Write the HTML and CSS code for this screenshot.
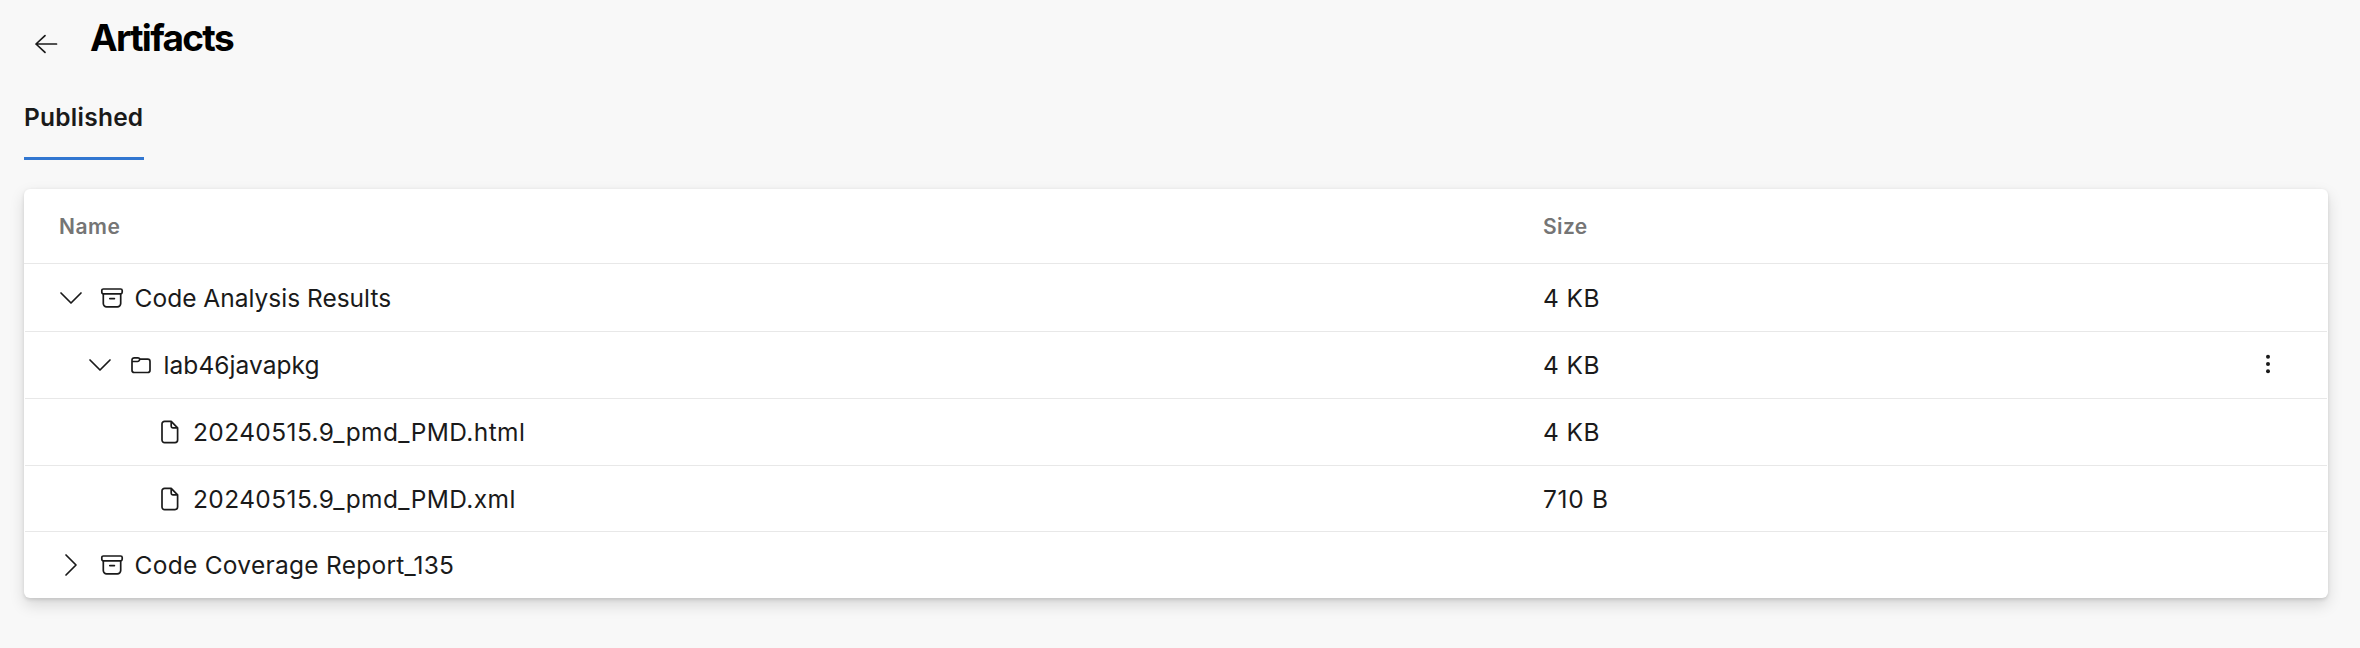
FILE: index.html
```
<!DOCTYPE html>
<html lang="en">
<head>
<meta charset="utf-8">
<title>Artifacts</title>
<link rel="stylesheet" href="styles.css">
</head>
<body>
<svg class="defs" aria-hidden="true">
  <symbol id="down" viewBox="0 0 24 24"><path d="M2 7 12 17 22 7"/></symbol>
  <symbol id="right" viewBox="0 0 24 24"><path d="M7 2 17 12 7 22"/></symbol>
  <symbol id="archive" viewBox="0 0 24 24"><rect x="1.8" y="3" width="20.4" height="4.8" rx="1.6"/><path d="M3.3 7.8V17.5a3.3 3.3 0 0 0 3.3 3.3H17.4a3.3 3.3 0 0 0 3.3-3.3V7.8M9.8 12.6H14.4"/></symbol>
  <symbol id="folder" viewBox="0 0 24 24"><path d="M3 7.500V17.200a2.300 2.300 0 0 0 2.300 2.300H18.700a2.300 2.300 0 0 0 2.300-2.300V8.400a2.300 2.300 0 0 0-2.300-2.300H11L10 5.100Q9.600 4.800 9 4.800H5.300A2.300 2.300 0 0 0 3 7.100M3 8.500H8.500Q9.400 8.500 10 7.800L11 6.100"/></symbol>
  <symbol id="file" viewBox="0 0 24 24"><path d="M13.2 1.4H6.600A2.600 2.600 0 0 0 4 4V20a2.600 2.600 0 0 0 2.600 2.600H17A2.600 2.600 0 0 0 19.600 20V7.800ZM13.200 1.400V6.200A1.600 1.600 0 0 0 14.800 7.800H19.600"/></symbol>
</svg>
<header class="top">
  <svg class="back" viewBox="0 0 24 20"><path d="M22.500 10H2M11 1.700 2 10 11 18.300"/></svg>
  <h1 class="title">Artifacts</h1>
</header>
<nav class="tabs"><a class="tab">Published</a></nav>
<main class="card">
  <div class="row head"><div class="name">Name</div><div class="size">Size</div></div>
  <div class="row first"><div class="name"><svg class="icon"><use href="#down"/></svg><svg class="icon kind"><use href="#archive"/></svg><span>Code Analysis Results</span></div><div class="size">4 KB</div></div>
  <div class="row"><div class="name level-2"><svg class="icon"><use href="#down"/></svg><svg class="icon kind"><use href="#folder"/></svg><span class="folder-name">lab46javapkg</span></div><div class="size">4 KB</div><svg class="more" viewBox="0 0 6 20"><circle cx="3" cy="2.800" r="2"/><circle cx="3" cy="10" r="2"/><circle cx="3" cy="17.200" r="2"/></svg></div>
  <div class="row"><div class="name level-3"><svg class="icon"><use href="#file"/></svg><span class="file-name">20240515.9_pmd_PMD.html</span></div><div class="size">4 KB</div></div>
  <div class="row short"><div class="name level-3"><svg class="icon"><use href="#file"/></svg><span class="file-name">20240515.9_pmd_PMD.xml</span></div><div class="size bytes">710 B</div></div>
  <div class="row short last"><div class="name"><svg class="icon"><use href="#right"/></svg><svg class="icon kind"><use href="#archive"/></svg><span class="report-name">Code Coverage Report_135</span></div></div>
</main>
</body>
</html>
```
FILE: styles.css
```
* { box-sizing: border-box; }
body {
  margin: 0;
  height: 648px;
  padding: 0 32px 0 24px;
  background: #f8f8f8;
  color: #1a1a1a;
  font: 400 24.5px/30px Inter, "Liberation Sans", sans-serif;
  overflow: hidden;
}
svg { fill: none; stroke: #1a1a1a; stroke-width: 1.7; stroke-linecap: round; stroke-linejoin: round; flex: none; }
.defs { display: none; }
.top { display: flex; height: 87px; padding: 16px 0 0 10px; gap: 32px; }
.back { width: 24px; height: 20px; margin-top: 17.5px; }
.title { margin: 0; color: #000; font-size: 37px; line-height: 44px; font-weight: 700; letter-spacing: -1.7px; }
.tabs { display: flex; height: 102px; }
.tab { width: 120px; height: 73px; padding-top: 15px; border-bottom: 3px solid #3277d1; font-weight: 600; letter-spacing: .25px; }
.card { height: 409px; background: #fff; border-radius: 6px; box-shadow: 0 6.4px 14.4px rgba(0,0,0,.132), 0 1.2px 3.6px rgba(0,0,0,.108); }
.row { display: flex; align-items: center; height: 67px; margin: 0 1px; border-bottom: 1px solid #e8e8e8; white-space: nowrap; }
.head { height: 75px; margin: 0; padding: 1px 0 0 1px; color: #757575; font-size: 21px; font-weight: 600; letter-spacing: .5px; }
.first { height: 68px; padding-top: 1px; }
.short { height: 66px; }
.last { border-bottom: 0; }
.name { display: flex; align-items: center; width: 1518px; padding-left: 33.5px; }
.head .name { padding-left: 34px; }
.level-2 { padding-left: 62.5px; }
.level-3 { padding-left: 132.7px; }
.icon { width: 24px; height: 24px; margin-right: 11.3px; }
.kind { margin: 0 10.6px 0 6.2px; }
.folder-name { letter-spacing: .05px; }
.file-name { letter-spacing: .4px; }
.report-name { letter-spacing: .27px; }
.size { width: 100px; letter-spacing: .4px; }
.bytes { letter-spacing: .7px; }
.more { width: 6px; height: 20px; margin: 0 0 2px 622px; fill: #1a1a1a; stroke: none; }
```
